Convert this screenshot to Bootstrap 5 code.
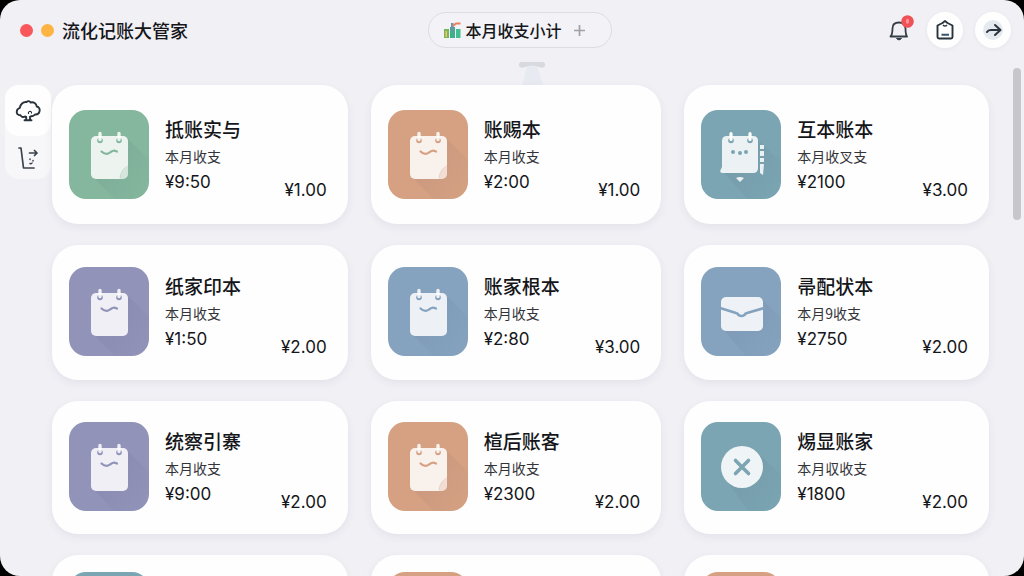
<!DOCTYPE html>
<html lang="zh-CN">
<head>
<meta charset="utf-8">
<meta name="viewport" content="width=device-width, initial-scale=1">
<title>流化记账大管家</title>
<link href="https://cdn.jsdelivr.net/npm/bootstrap@5.3.0/dist/css/bootstrap.min.css" rel="stylesheet">
<style>
  body { background: #000; color: #15161a; font-family: "Liberation Sans", "Noto Sans CJK SC", sans-serif; }
  button { color: inherit; }
  .shell { height: 100vh; border-radius: 20px; background: #f1f0f5; }
  .topbar { display: grid; grid-template-columns: 1fr auto 1fr; padding: 12px 13px 0 20px; height: 60px; align-items: start; }
  .topbar > * { height: 36px; }
  .dot { width: 13px; height: 13px; border-radius: 50%; }
  .dot-red { background: #f9575c; }
  .dot-amber { background: #fdb443; }
  .app-name { font-size: 18px; font-weight: 500; line-height: 36px; font-family: "Noto Sans CJK SC", sans-serif; }
  .pill { width: 184px; border: 1px solid #dddce2; border-radius: 18px; background: #f3f2f6; font: 500 16px/32px "Noto Sans CJK SC", sans-serif; padding: 0 26px 0 14px; }
  .round-btn { width: 36px; height: 36px; border: 0; border-radius: 50%; background: #fefefe; box-shadow: 0 1px 4px rgba(60, 60, 90, .06); padding: 0; }
  .bell { background: none; box-shadow: none; }
  .mark-top { height: 25px; padding-left: 40px; }
  .workspace { padding: 0 35px 0 5px; gap: 1px; }
  .side { width: 46px; border-radius: 14px; background: #f7f7fa; }
  .side-btn { height: 51px; border: 0; border-radius: 14px; background: none; padding: 0; }
  .side-btn.active { background: #fefefe; }
  .side-btn:last-child { height: 43px; }
  .ledger-grid { display: grid; grid-template-columns: 296fr 291fr 305fr; gap: 21px 23px; }
  .ledger { border: 0; border-radius: 26px; background: #fefefe; color: inherit; padding: 25px 21px 25px 17px; box-shadow: 0 3px 8px rgba(60, 60, 90, .07); }
  .ledger:nth-child(n+4) { padding-top: 22px; padding-bottom: 24px; }
  .ledger:nth-child(n+7) { padding-top: 21px; padding-bottom: 23px; }
  .ledger:nth-child(n+10) { padding-top: 17px; }
  .tile { width: 80px; height: 89px; border-radius: 17px; color: #84b79d; background: currentColor; overflow: hidden; }
  .tile svg { display: block; }
  .t-orange { color: #d6a182; }
  .t-teal { color: #7ba5b2; }
  .t-purple { color: #9193b9; }
  .t-blue { color: #85a3be; }
  .info { padding: 4px 0 0 16px; white-space: nowrap; }
  .name { font: 500 19px/30px "Noto Sans CJK SC", sans-serif; margin: 0; }
  .note { font: 400 14px/24px "Noto Sans CJK SC", sans-serif; color: #33343a; }
  .sum, .total { font-family: Inter, "Liberation Sans", sans-serif; font-size: 17px; }
  .sum { line-height: 28px; }
  .total { line-height: 18px; }
  .thumb { position: absolute; right: 3px; top: 68px; width: 8px; height: 152px; border-radius: 4px; background: #c7c7cb; }
</style>
</head>
<body>
<svg width="0" height="0" class="position-absolute" aria-hidden="true">
  <defs>
    <linearGradient id="cast" x1="0" y1="0" x2="1" y2="1"><stop offset="0" stop-color="#303060" stop-opacity=".1"/><stop offset=".8" stop-color="#303060" stop-opacity="0"/></linearGradient>
    <symbol id="pad" viewBox="0 0 80 89">
      <path d="M58 28 88 58V110H66L24 67Z" fill="url(#cast)"/>
      <rect x="22" y="26" width="37" height="43" rx="5" fill="currentColor"/>
      <rect x="22" y="26" width="37" height="43" rx="5" fill="#fff" fill-opacity=".85"/>
      <circle cx="31" cy="30.500" r="2.800" fill="currentColor"/><circle cx="50" cy="30.500" r="2.800" fill="currentColor"/>
      <path d="M31 23.500v6M50 23.500v6" stroke="#fff" stroke-opacity=".85" stroke-width="3.400" stroke-linecap="round"/>
      <path d="M32.500 41.500c3 2.800 5.500 3.400 8.500 1 3-2.200 4-2.200 7-1" fill="none" stroke="currentColor" stroke-width="2.200" stroke-linecap="round"/>
    </symbol>
    <symbol id="fold" viewBox="0 0 80 89"><path d="M51 69q1-10 8-12v7q0 5-5 5z" fill="currentColor" opacity=".22"/><path d="M51 68q1-9 8-12" stroke="currentColor" opacity=".35" fill="none"/></symbol>
    <symbol id="pad-dots" viewBox="0 0 80 89">
      <path d="M55 28 88 60V110H66L24 64Z" fill="url(#cast)"/>
      <path d="M26 26h26q5 0 5 5v27q0 5-5 5H21q-3-1-1-4l1-2V31q0-5 5-5z" fill="currentColor"/>
      <path d="M26 26h26q5 0 5 5v27q0 5-5 5H21q-3-1-1-4l1-2V31q0-5 5-5z" fill="#fff" fill-opacity=".86"/>
      <circle cx="30" cy="30.500" r="2.800" fill="currentColor"/><circle cx="49" cy="30.500" r="2.800" fill="currentColor"/>
      <path d="M30 23.500v6M49 23.500v6" stroke="#fff" stroke-width="3.200" stroke-linecap="round"/>
      <path d="M59 35h4v4h-4zM59 41h4v5h-4zM59 48h4v4h-4zM59 54h4l-1 11-3-2zM35 68q4-2 8 0l-4 4z" fill="#fff" fill-opacity=".85"/>
      <g fill="currentColor"><circle cx="32" cy="42" r="2"/><circle cx="39" cy="43" r="2"/><circle cx="45" cy="42" r="2"/></g>
    </symbol>
    <symbol id="mail" viewBox="0 0 80 89">
      <path d="M60 31 92 62V110H62L22 62Z" fill="url(#cast)"/>
      <rect x="20" y="30" width="42" height="34" rx="5" fill="currentColor"/>
      <rect x="20" y="30" width="42" height="34" rx="5" fill="#fff" fill-opacity=".86"/>
      <path d="M19 41 35 46q2 .5 2.500 2 3 2 6 0 .5-1.500 2.500-2l17-5" fill="none" stroke="currentColor" stroke-width="2.700"/>
    </symbol>
    <symbol id="cross" viewBox="0 0 80 89">
      <path d="M56 30 90 62V110H62L26 59Z" fill="url(#cast)"/>
      <circle cx="41" cy="45" r="21" fill="currentColor"/>
      <circle cx="41" cy="45" r="21" fill="#fff" fill-opacity=".88"/>
      <path d="m34.500 38.500 13 13m0-13-13 13" stroke="currentColor" stroke-width="3.600" stroke-linecap="round"/>
    </symbol>
  </defs>
</svg>

<div class="shell position-relative overflow-hidden">
  <header class="topbar">
    <div class="d-flex align-items-center">
      <span class="dot dot-red"></span>
      <span class="dot dot-amber ms-2"></span>
      <span class="app-name ms-2">流化记账大管家</span>
    </div>
    <button class="pill ms-2 d-flex align-items-center" type="button">
      <svg width="19" height="18" viewBox="0 0 19 18" aria-hidden="true">
        <path d="M1 8h5v9H1z" fill="#79b65b"/><path d="M2.500 10h1.500v6H2.500z" fill="#f3c66b"/>
        <path d="M7 6h5v11H7z" fill="#3fae8c"/><path d="M8 2h2.500v8H8z" fill="#6d93a9"/>
        <path d="M13 8h4.500v9H13z" fill="#43bd91"/><path d="M10 5l3-2.500h4.500" fill="none" stroke="#ee805e" stroke-width="2"/>
      </svg>
      <span class="ms-1">本月收支小计</span>
      <svg class="ms-auto" width="11" height="11" viewBox="0 0 11 11" aria-hidden="true"><path d="M5.500 0v11M0 5.500h11" stroke="#a0a0a6" stroke-width="1.700"/></svg>
    </button>
    <div class="d-flex justify-content-end gap-2">
      <button class="round-btn bell" type="button" aria-label="通知">
        <svg width="36" height="36" viewBox="0 0 36 36" fill="none" aria-hidden="true">
          <path d="M7.500 24.500c2-2 2-4 2-8q0-6 6.500-6 6 0 6.500 6c0 4 0 6 1.500 8z" stroke="#343c46" stroke-width="1.800" stroke-linejoin="round"/>
          <path d="M13.500 26.500q2.500 3 5 0z" fill="#343c46" stroke="#343c46"/>
          <circle cx="24.500" cy="9.500" r="6.300" fill="#ef5256"/><ellipse cx="24.500" cy="9.300" rx="1.500" ry="2.800" fill="#ff9694"/>
        </svg>
      </button>
      <button class="round-btn" type="button" aria-label="账单">
        <svg width="36" height="36" viewBox="0 0 36 36" fill="none" stroke="#28333d" aria-hidden="true">
          <path d="M10.500 13.500 15.500 11 18 9l2.500 2 5 2.500V25q0 1.500-1.500 1.500H12q-1.500 0-1.500-1.500z" stroke-width="1.900" stroke-linejoin="round"/>
          <path d="M16 13q2 2.200 4 0" stroke-width="1.500"/><path d="M14.500 22.800h7.500" stroke="#35546d" stroke-width="2"/>
        </svg>
      </button>
      <button class="round-btn ms-1" type="button" aria-label="前进">
        <svg width="36" height="36" viewBox="0 0 36 36" fill="none" aria-hidden="true">
          <circle cx="18" cy="18" r="10" fill="#e5eaf0"/>
          <path d="M12 20q1-2 4-2h9M20 13l5.500 5-5.500 5" stroke="#2c343d" stroke-width="2" stroke-linecap="round" stroke-linejoin="round"/>
        </svg>
      </button>
    </div>
  </header>

  <div class="mark-top d-flex justify-content-center" aria-hidden="true">
    <svg width="30" height="25" viewBox="0 0 30 25"><path d="M9 8q6-5 12 0l2 7 3 10H5l3-10z" fill="#e7eaf0"/><path d="M4 2h22q3 1 2 4-2 3-6 1-7-3-14 0-4 2-6-1-1-3 2-4z" fill="#d8d9df"/></svg>
  </div>

  <div class="workspace d-flex align-items-start">
    <nav class="side d-flex flex-column flex-shrink-0" aria-label="导航">
      <button class="side-btn active" type="button" aria-label="总览">
        <svg width="28" height="26" viewBox="0 0 28 26" fill="none" stroke="#29313b" stroke-width="1.900" stroke-linecap="round" stroke-linejoin="round" aria-hidden="true">
          <path d="M11 18.500c-2 1-4 .3-4.500-1.200-2.700-.2-4.200-1.800-3.700-4 .2-2 1.500-3 3-3.500C6.500 6 9.500 3.500 12.500 4c1.500-1.500 3.500-1 4 .5 3-1 6 1 6.200 4 2.500.5 3.500 3 2.800 5-.6 2-2.500 3.300-4.500 3-.8 1-2.500 2-4 1.700M11 18.500l1.200.3v3M17 18.200l-1 .6v3M10.500 22.300h7"/>
          <path d="M14.500 14v1.500M15.500 13.500q2-.5 2 1.500" stroke-width="1.200"/>
        </svg>
      </button>
      <button class="side-btn" type="button" aria-label="统计">
        <svg width="26" height="26" viewBox="0 0 26 26" fill="none" stroke="#3b434c" stroke-width="1.700" stroke-linecap="round" stroke-linejoin="round" aria-hidden="true">
          <path d="M4 3h2l2.500 20H19M14.500 8H22M19.500 5.500 22 8l-2.500 2.500"/><path d="M15 14v.5M18 15.500v.5M15 18.500q1.500.5 2-.5" stroke-width="1.500"/>
        </svg>
      </button>
    </nav>

    <main class="ledger-grid flex-grow-1" id="ledgers"></main>
  </div>
  <div class="thumb" aria-hidden="true"></div>
</div>

<script>
  // tile colour, icon, folded corner, name, note, sum, total
  const ledgers = [
    ['t-green', 'pad', 1, '抵账实与', '本月收支', '¥9:50', '¥1.00'],
    ['t-orange', 'pad', 1, '账赐本', '本月收支', '¥2:00', '¥1.00'],
    ['t-teal', 'pad-dots', 0, '互本账本', '本月收叉支', '¥2100', '¥3.00'],
    ['t-purple', 'pad', 0, '纸家印本', '本月收支', '¥1:50', '¥2.00'],
    ['t-blue', 'pad', 0, '账家根本', '本月收支', '¥2:80', '¥3.00'],
    ['t-blue', 'mail', 0, '帚配状本', '本月9收支', '¥2750', '¥2.00'],
    ['t-purple', 'pad', 0, '统察引寨', '本月收支', '¥9:00', '¥2.00'],
    ['t-orange', 'pad', 1, '楦后账客', '本月收支', '¥2300', '¥2.00'],
    ['t-teal', 'cross', 0, '焬显账家', '本月収收支', '¥1800', '¥2.00'],
    ['t-teal', 'pad', 0, '', '', '', ''],
    ['t-orange', 'pad', 1, '', '', '', ''],
    ['t-orange', 'pad', 1, '', '', '', '']
  ];
  document.getElementById('ledgers').innerHTML = ledgers.map(([tone, icon, fold, name, note, sum, total]) => `
    <article class="ledger d-flex align-items-start">
      <div class="tile flex-shrink-0 ${tone}"><svg width="80" height="89" aria-hidden="true"><use href="#${icon}"/>${fold ? '<use href="#fold"/>' : ''}</svg></div>
      ${name ? `<div class="info"><h2 class="name">${name}</h2><div class="note">${note}</div><div class="sum">${sum}</div></div>
      <div class="total ms-auto align-self-end">${total}</div>` : ''}
    </article>`).join('');
</script>
<script src="https://cdn.jsdelivr.net/npm/bootstrap@5.3.0/dist/js/bootstrap.bundle.min.js"></script>
</body>
</html>
